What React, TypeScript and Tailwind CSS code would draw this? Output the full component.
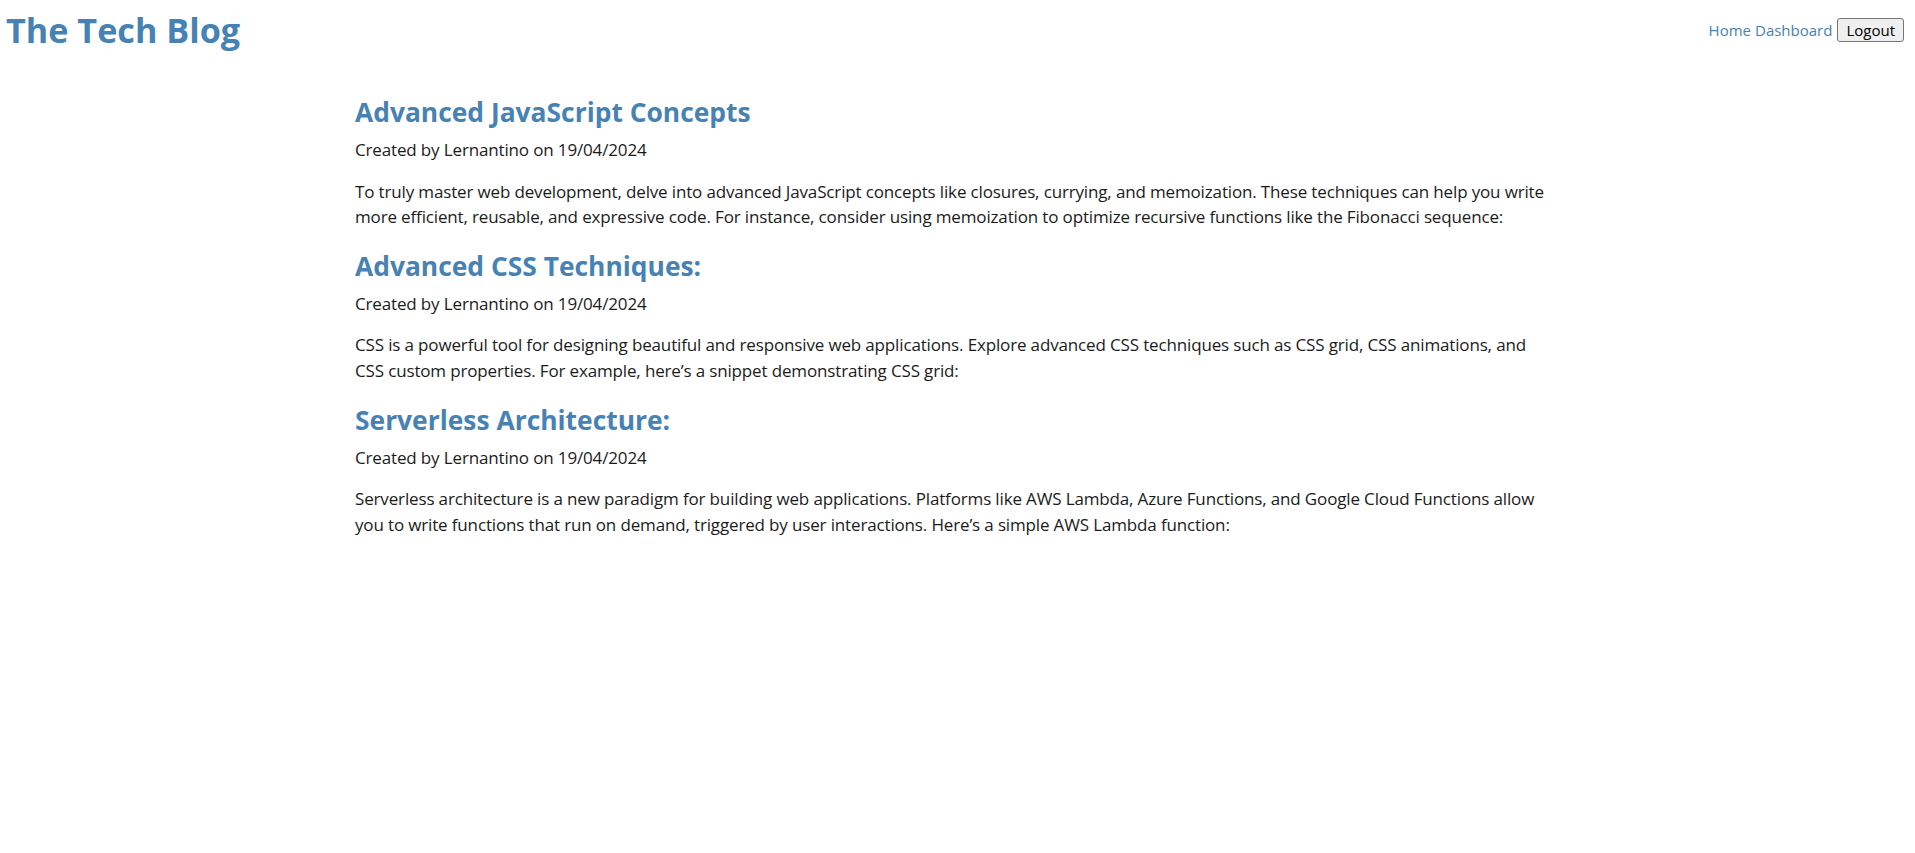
const posts = [
  {
    title: 'Advanced JavaScript Concepts',
    author: 'Lernantino',
    date: '19/04/2024',
    body: 'To truly master web development, delve into advanced JavaScript concepts like closures, currying, and memoization. These techniques can help you write more efficient, reusable, and expressive code. For instance, consider using memoization to optimize recursive functions like the Fibonacci sequence:',
  },
  {
    title: 'Advanced CSS Techniques:',
    author: 'Lernantino',
    date: '19/04/2024',
    body: 'CSS is a powerful tool for designing beautiful and responsive web applications. Explore advanced CSS techniques such as CSS grid, CSS animations, and CSS custom properties. For example, here\u2019s a snippet demonstrating CSS grid:',
  },
  {
    title: 'Serverless Architecture:',
    author: 'Lernantino',
    date: '19/04/2024',
    body: 'Serverless architecture is a new paradigm for building web applications. Platforms like AWS Lambda, Azure Functions, and Google Cloud Functions allow you to write functions that run on demand, triggered by user interactions. Here\u2019s a simple AWS Lambda function:',
  },
]

export default function App() {
  return (
    <div className="min-h-[853px] bg-white text-[#1b1b1b] font-['Open_Sans',sans-serif]">
      <header className="flex items-start justify-between pl-[6px] pr-[11px]">
        <h1 className="mt-[4px] text-[34.2px] leading-[51px] font-bold text-[#4682b4]">The Tech Blog</h1>
        <nav className="flex items-center mt-[18px] text-[15px] leading-[24px]">
          <a href="#" className="text-[#4682b4]">Home</a>
          <a href="#" className="ml-[4px] text-[#4682b4]">Dashboard</a>
          <button className="ml-[5px] h-[24px] px-[8px] border border-[#767676] rounded-[3px] bg-[#efefef] text-black text-[15px] leading-none">
            Logout
          </button>
        </nav>
      </header>

      <main className="ml-[355px] w-[1201px] mt-[38px]">
        {posts.map((post, i) => (
          <article key={post.title} className={i === 0 ? '' : 'mt-[17px]'}>
            <h2 className="text-[26.4px] leading-[38px] font-bold text-[#4682b4]">{post.title}</h2>
            <p className="mt-[6px] text-[17px] leading-[25.6px] tracking-[-0.15px]">
              Created by {post.author} on {post.date}
            </p>
            <p className="mt-[16px] text-[17px] leading-[25.6px] tracking-[-0.15px]">{post.body}</p>
          </article>
        ))}
      </main>
    </div>
  )
}
